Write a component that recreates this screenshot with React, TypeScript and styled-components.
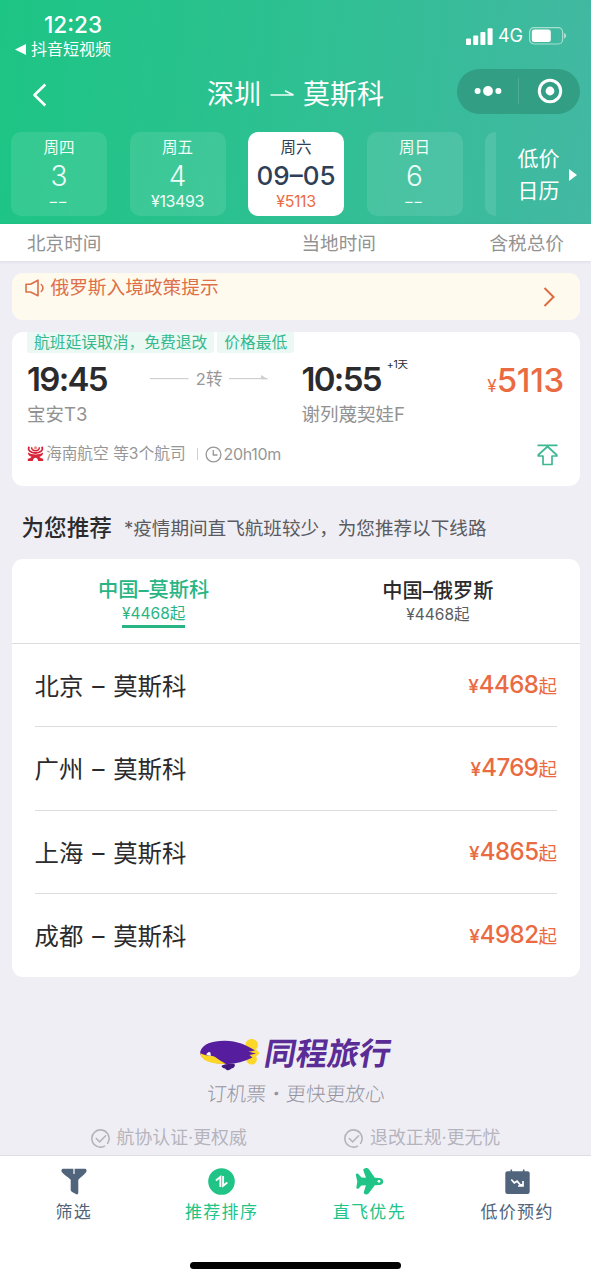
import React from 'react';
import styled, { createGlobalStyle } from 'styled-components';

const GlobalStyle = createGlobalStyle`
  * { box-sizing: border-box; }
  body {
    margin: 0;
    background: #efeef5;
    font-family: Inter, "Noto Sans CJK SC", sans-serif;
    color: #2b2b2d;
  }
  svg { display: block; flex: none; }
`;

type TextProps = {
  $size: number;
  $line?: number;
  $color?: string;
  $weight?: number;
  $spacing?: number;
};

const Text = styled.span<TextProps>`
  display: block;
  white-space: nowrap;
  font-size: ${p => p.$size}px;
  line-height: ${p => p.$line ?? 24}px;
  color: ${p => p.$color ?? 'inherit'};
  font-weight: ${p => p.$weight ?? 400};
  letter-spacing: ${p => p.$spacing ?? 0}px;
`;

const Screen = styled.main`
  width: 591px;
  height: 1280px;
  overflow: hidden;
  display: flex;
  flex-direction: column;
  background: #efeef5;
`;

const Header = styled.header`
  height: 224px;
  flex: none;
  color: #fff;
  background: linear-gradient(97deg, #1dc584 0%, #2ec092 50%, #43b8a3 100%);
`;

const StatusBar = styled.div`
  height: 61px;
  display: flex;
  justify-content: space-between;
  padding: 13px 24px 0 15px;
`;

const BackToApp = styled.div`
  display: flex;
  align-items: center;
  gap: 5px;
  height: 24px;
`;

const Clock = styled(Text)`
  padding-left: 29px;
`;

const Signals = styled.div`
  display: flex;
  align-items: center;
  height: 24px;
  margin-top: 11px;
`;

const NetworkType = styled(Text)`
  margin: 0 6px 0 5px;
`;

const TitleBar = styled.div`
  height: 71px;
  display: grid;
  grid-template-columns: 207px 1fr 134px;
  align-items: start;
`;

const BackButton = styled.div`
  padding: 22px 0 0 32px;
`;

const Route = styled.div`
  display: flex;
  align-items: center;
  height: 68px;
  gap: 8.5px;
`;

const Capsule = styled.div`
  margin-top: 8px;
  width: 123px;
  height: 44.5px;
  border-radius: 23px;
  background: #329f85;
  display: flex;
  align-items: center;
`;

const CapsuleHalf = styled.div`
  flex: 1;
  height: 26px;
  display: flex;
  align-items: center;
  justify-content: center;
  & + & { border-left: 1px solid #4fab94; }
`;

const DateStrip = styled.div`
  display: flex;
  padding-left: 11px;
`;

const DateList = styled.div`
  width: 485px;
  overflow: hidden;
  display: flex;
  gap: 22.5px;
`;

const DateCard = styled.div<{ $active?: boolean }>`
  flex: none;
  width: 96px;
  height: 84px;
  border-radius: 10px;
  padding-top: 5px;
  display: flex;
  flex-direction: column;
  align-items: center;
  color: ${p => (p.$active ? '#2f3f57' : '#effdf7')};
  background: ${p => (p.$active ? '#fff' : 'rgba(255,255,255,0.1)')};
`;

const LowFare = styled.div`
  display: flex;
  align-items: center;
  padding: 2px 0 0 21.5px;
  gap: 9px;
  height: 84px;
`;

const ColumnHeads = styled.div`
  height: 36.5px;
  flex: none;
  display: grid;
  grid-template-columns: 274.5px 188px 1fr;
  padding: 6.5px 0 0 27px;
  background: #fff;
  box-shadow: 0 1px 3px rgba(60, 50, 90, 0.1);
`;

const Content = styled.div`
  padding: 12px 11px 0 11.5px;
  flex: 1;
  min-height: 0;
`;

const Notice = styled.section`
  height: 47.5px;
  border-radius: 11px;
  background: #fffaee;
  display: flex;
  justify-content: space-between;
  padding: 3px 25px 0 13px;
`;

const NoticeLabel = styled.div`
  display: flex;
  align-items: center;
  gap: 6px;
  height: 25px;
`;

const NoticeArrow = styled.div`
  padding-top: 11px;
`;

const Card = styled.section`
  background: #fff;
  border-radius: 11px;
`;

const FlightCard = styled(Card)`
  margin-top: 11.5px;
  height: 154.5px;
  padding: 0 16px 0 15.5px;
`;

const Tags = styled.div`
  display: flex;
  gap: 3px;
`;

const Tag = styled(Text)`
  padding: 0 7px;
  background: #ebf8f3;
  border-radius: 0 0 3px 3px;
`;

const FlightMain = styled.div`
  display: grid;
  grid-template-columns: 274.5px 1fr auto;
  height: 82px;
  padding-top: 9px;
`;

const TimeLine = styled.div`
  display: flex;
  height: 34px;
  align-items: center;
`;

const Transfer = styled.div`
  display: flex;
  align-items: center;
  gap: 7px;
  margin-left: 43px;
`;

const DayOffset = styled(Text)`
  align-self: flex-start;
  margin: -4px 0 0 6px;
`;

const Fare = styled.div`
  display: flex;
  align-items: baseline;
  color: #ea6a42;
  height: 37px;
`;

const FlightFoot = styled.div`
  display: flex;
  align-items: center;
  height: 24px;
  margin-top: 7px;
  gap: 2px;
`;

const Separator = styled.i`
  width: 1px;
  height: 12px;
  margin: 0 5px 0 9px;
  background: #d0d0d0;
`;

const Collapse = styled.div`
  margin-left: auto;
  padding: 2px 6px 0 0;
`;

const SectionTitle = styled.div`
  display: flex;
  align-items: center;
  gap: 12px;
  height: 73px;
  padding: 10px 0 0 10px;
`;

const RouteCard = styled(Card)`
  height: 418px;
`;

const Tabs = styled.div`
  height: 84.5px;
  display: grid;
  grid-template-columns: 1fr 1fr;
  border-bottom: 1px solid #dcdce0;
`;

const Tab = styled.div<{ $active?: boolean }>`
  display: flex;
  flex-direction: column;
  align-items: center;
  padding-top: ${p => (p.$active ? 19 : 20)}px;
  color: ${p => (p.$active ? '#29b583' : '#2b2b2d')};
`;

const TabPrice = styled(Text)<{ $active?: boolean }>`
  height: 26px;
  border-bottom: 3.500px solid ${p => (p.$active ? '#29b583' : 'transparent')};
`;

const RouteRow = styled.div`
  height: 83.5px;
  margin: 0 23px;
  padding-top: 2px;
  display: flex;
  justify-content: space-between;
  align-items: center;
  border-bottom: 1px solid #dddde0;
  &:last-child { border-bottom-color: transparent; }
`;

const RouteName = styled(Text)`
  word-spacing: 2px;
`;

const RoutePrice = styled.div`
  display: flex;
  align-items: baseline;
  color: #ea6a42;
`;

const Brand = styled.footer`
  display: flex;
  flex-direction: column;
  align-items: center;
  padding-top: 59px;
`;

const BrandLogo = styled.div`
  display: flex;
  align-items: center;
  gap: 5px;
  height: 36px;
`;

const BrandName = styled(Text)`
  transform: skewX(-10deg);
`;

const Slogan = styled(Text)`
  margin-top: 8px;
  font-family: "Noto Sans CJK SC", sans-serif;
  transform: skewX(-5deg);
`;

const Pledges = styled.div`
  width: 100%;
  display: grid;
  grid-template-columns: 253.5px 1fr;
  padding-left: 79px;
  margin-top: 20px;
`;

const Pledge = styled.div`
  display: flex;
  align-items: center;
  gap: 7px;
`;

const BottomBar = styled.nav`
  height: 125.5px;
  flex: none;
  background: #fff;
  border-top: 1px solid #dfdee3;
  display: flex;
  flex-direction: column;
  align-items: center;
`;

const Actions = styled.div`
  width: 100%;
  display: grid;
  grid-template-columns: repeat(4, 1fr);
`;

const Action = styled.div<{ $active?: boolean }>`
  display: flex;
  flex-direction: column;
  align-items: center;
  padding-top: 12px;
  gap: 3px;
  color: ${p => (p.$active ? '#20c486' : '#50647c')};
`;

const HomeIndicator = styled.div`
  width: 211px;
  height: 7px;
  border-radius: 4px;
  background: #000;
  margin-top: 36px;
`;

const dates = [
  { week: '周四', day: '3' },
  { week: '周五', day: '4', price: '¥13493' },
  { week: '周六', day: '09–05', price: '¥5113', active: true },
  { week: '周日', day: '6' },
];

const routes = [
  { from: '北京', price: '4468' },
  { from: '广州', price: '4769' },
  { from: '上海', price: '4865' },
  { from: '成都', price: '4982' },
];

const SignalIcon = () => (
  <svg width="27" height="17" viewBox="0 0 27 17" fill="#fff">
    <rect x="0" y="10.5" width="5" height="6.5" rx="1" />
    <rect x="7.2" y="7.5" width="5" height="9.5" rx="1" />
    <rect x="14.4" y="4" width="5" height="13" rx="1" />
    <rect x="21.6" y="0.3" width="5" height="16.7" rx="1" />
  </svg>
);

const BatteryIcon = () => (
  <svg width="38" height="18" viewBox="0 0 38 18">
    <rect x="0.6" y="0.6" width="33" height="16.4" rx="4.5" fill="none" stroke="#a9dfcf" strokeWidth="1.2" />
    <rect x="2.8" y="2.6" width="19" height="12.4" rx="2.5" fill="#fff" />
    <path d="M35 6v5.6c1.6-.5 2.2-1.600 2.200-2.800S36.600 6.500 35 6z" fill="#a9dfcf" />
  </svg>
);

const BackIcon = () => (
  <svg width="15" height="24" viewBox="0 0 15 24" fill="none" stroke="#fff" strokeWidth="2.6">
    <path d="M13.300 1.500L2.500 12l10.800 10.500" strokeLinejoin="round" />
  </svg>
);

const RouteArrow = () => (
  <svg width="25" height="12" viewBox="0 0 25 12" fill="none" stroke="#f0fdf8" strokeWidth="1.7">
    <path d="M0.500 6H23.500L15 1.800" />
  </svg>
);

const MoreIcon = () => (
  <svg width="28" height="12" viewBox="0 0 28 12" fill="#fff">
    <circle cx="3.600" cy="6" r="3" />
    <circle cx="14" cy="6" r="4.900" />
    <circle cx="24.400" cy="6" r="3" />
  </svg>
);

const TargetIcon = () => (
  <svg width="26" height="26" viewBox="0 0 26 26">
    <circle cx="13" cy="13" r="10.700" fill="none" stroke="#fff" strokeWidth="3" />
    <circle cx="13" cy="13" r="4.400" fill="#fff" />
  </svg>
);

const SpeakerIcon = () => (
  <svg width="20" height="18" viewBox="0 0 20 18" fill="none" stroke="#dd7048" strokeWidth="1.600" strokeLinejoin="round" strokeLinecap="round">
    <path d="M1 5.200h4.500L13 1.200v15.600L5.500 13H1z" />
    <path d="M16.300 5.500c2.200 2 2.200 5 0 7" />
  </svg>
);

const TransferLine = ({ arrow }: { arrow?: boolean }) => (
  <svg width="39" height="8" viewBox="0 0 39 8" fill="#cfcfcf">
    <rect x="0" y="3" width="38.500" height="1.200" />
    {arrow && <path d="M32 0L39 4.200H32z" />}
  </svg>
);

const HainanLogo = () => (
  <svg width="17" height="16" viewBox="0 0 17 16" fill="none">
    <path d="M2.200 0.800C0.300 4 3.500 7 8.500 7s8.200-3 6.300-6.200" stroke="#d8253a" strokeWidth="1.800" />
    <path d="M4.600 1.200C4.300 6 12.700 6 12.400 1.200" stroke="#d8253a" strokeWidth="1.500" />
    <circle cx="8.500" cy="1.800" r="1.500" fill="#e98a80" />
    <path d="M1 6.500C4 9 13 9 16 6.500c.5 2.200-1.500 3.700-3.600 4.300.8 1 1.800 1.700 3.800 1.900V15h-5c-.2-2-1.200-3.300-2.700-3.300S6 13 5.800 15h-5v-2.300c2-.2 3-.9 3.800-1.900C2.500 10.200.5 8.700 1 6.500z" fill="#d8253a" />
  </svg>
);

const ClockIcon = () => (
  <svg width="17" height="17" viewBox="0 0 17 17" fill="none" stroke="#979797" strokeWidth="1.300">
    <circle cx="8.500" cy="8.500" r="7.400" />
    <path d="M8.300 4v5h4.200" />
  </svg>
);

const TopIcon = () => (
  <svg width="21" height="22" viewBox="0 0 21 22" fill="none" stroke="#3db893" strokeWidth="1.700" strokeLinejoin="round">
    <path d="M0.500 1.300H20.500M10.500 2.500L1.200 11v1H6v8.500h9V12h4.800v-1z" />
  </svg>
);

const Airship = () => (
  <svg width="60" height="34" viewBox="0 0 60 34">
    <path d="M45.500 9C45 4 49 1.500 53 2.200c5 .8 6.500 6.300 3 10l3.500 4-3.500 3.300c2.500 3.500-.5 8.500-5 8-3 0-5-2.500-4.500-6z" fill="#fcd629" />
    <path d="M0.300 14.500C2.500 7 13 3.600 25 3.800c12 .2 21.500 4.200 30 9.700l-6.500 1.200 7.500 1.800-6.500 1.500 3 2.500C44 24.500 36 27 28 27 14 27-1 23 .3 14.500z" fill="#561d9e" />
    <path d="M0.300 16.300c4 1.300 6.500 2.700 10.200 2.500 5-.2 8.500 5 15.500 8C13.500 27.800.5 24 .3 16.300z" fill="#fcd629" />
    <path d="M21.500 28.800c3-2 9-2.600 13-1.800 1.200 2.600-1 4.200-3.300 4.600-1.700 2.200-5 2-6-.2-2.200-.1-3.600-1-3.700-2.600z" fill="#43177f" />
    <path d="M6.500 18c.2-1.600.6-2.300 1.300-2.300.3-.9 2.400-.9 2.700 0l.3 3.100c-1.400.1-2.900-.2-4.300-.8z" fill="#fff" />
  </svg>
);

const CheckIcon = () => (
  <svg width="19" height="19" viewBox="0 0 19 19" fill="none" stroke="#b5b4bd" strokeWidth="1.600" strokeLinecap="round">
    <path d="M13.500 17.100A8.600 8.600 0 1 1 16.600 14.300" />
    <path d="M5.300 9.500l3.300 3.300 6-6" />
  </svg>
);

const FilterIcon = () => (
  <svg width="26" height="27" viewBox="0 0 26 27">
    <path d="M2 .8h22c1.500 0 2 2 1.200 3.300-1.900 3-5.500 5-7.900 7.600v12.700c0 1.800-1 2.400-2.400 1.700l-3.800-2.200c-.8-.5-1.400-1.300-1.400-2.200v-10C7.300 9.100 2.700 7.100.8 4.100 0 2.800.5.800 2 .8z" fill="currentColor" />
    <path d="M13 0v6" stroke="#fff" strokeWidth="1.200" />
  </svg>
);

const SortIcon = () => (
  <svg width="27" height="27" viewBox="0 0 27 27">
    <circle cx="13.500" cy="13.500" r="13.300" fill="currentColor" />
    <path d="M7.900 12.500l4.500-3.600v10M15.100 8v9.700l4.200-3.300" fill="none" stroke="#fff" strokeWidth="1.900" />
  </svg>
);

const PlaneIcon = () => (
  <svg width="29" height="27" viewBox="0 0 29 27">
    <path d="M9 .8c2-1.200 4-.9 5.100.8l5.700 8.100 4.500.2c2.400.2 3.900 1.500 3.900 3.600s-1.500 3.300-3.900 3.500l-4.500.2-6.200 8.300c-1 1-3 1.200-4.200.4-.8-.6-.6-1.600-.4-2.500l1.900-6.200-4.500.3-2.800 3c-.9.800-2.400.2-2.200-1l.9-6L.8 7c-.2-1.300 1.400-2.100 2.300-1.200L6.500 9.500l4.500.2-2.400-6.400C8.200 2.300 8.200 1.300 9 .8z" fill="currentColor" />
    <circle cx="24" cy="13.300" r="1.400" fill="#fff" />
  </svg>
);

const CalendarIcon = () => (
  <svg width="25" height="27" viewBox="0 0 25 27">
    <path d="M6.300 1.500v5M18.700 1.500v5" stroke="currentColor" strokeWidth="1.600" />
    <rect x="0.300" y="3.300" width="24.400" height="22.700" rx="2.200" fill="currentColor" />
    <path d="M6.300 11.500l3 3.300 2.800-1.600 3.200 3.600 2.500-.3M18 13v5h-5" fill="none" stroke="#fff" strokeWidth="1.700" />
  </svg>
);

const actions = [
  { label: '筛选', icon: <FilterIcon /> },
  { label: '推荐排序', icon: <SortIcon />, active: true },
  { label: '直飞优先', icon: <PlaneIcon />, active: true },
  { label: '低价预约', icon: <CalendarIcon /> },
];

export default function App() {
  return (
    <Screen>
      <GlobalStyle />
      <Header>
        <StatusBar>
          <div>
            <Clock $size={22.5} $weight={500}>12:23</Clock>
            <BackToApp>
              <svg width="11" height="11" viewBox="0 0 11 11" fill="#fff"><path d="M0 5.500L11 0v11z" /></svg>
              <Text $size={16}>抖音短视频</Text>
            </BackToApp>
          </div>
          <Signals>
            <SignalIcon />
            <NetworkType $size={18}>4G</NetworkType>
            <BatteryIcon />
          </Signals>
        </StatusBar>
        <TitleBar>
          <BackButton><BackIcon /></BackButton>
          <Route>
            <Text $size={27} $line={34}>深圳</Text>
            <RouteArrow />
            <Text $size={27} $line={34}>莫斯科</Text>
          </Route>
          <Capsule>
            <CapsuleHalf><MoreIcon /></CapsuleHalf>
            <CapsuleHalf><TargetIcon /></CapsuleHalf>
          </Capsule>
        </TitleBar>
        <DateStrip>
          <DateList>
            {dates.map(d => (
              <DateCard key={d.week} $active={d.active}>
                <Text $size={15.5} $line={22}>{d.week}</Text>
                <Text $size={d.active ? 26 : 28} $line={34} $weight={d.active ? 500 : 300}>{d.day}</Text>
                {d.price ? (
                  <Text $size={16} $line={17} $spacing={-0.4} $color={d.active ? '#ec6c45' : undefined}>{d.price}</Text>
                ) : (
                  <Text $size={14.500} $line={17} $spacing={2}>––</Text>
                )}
              </DateCard>
            ))}
            <DateCard />
          </DateList>
          <LowFare>
            <div>
              <Text $size={21} $line={32}>低价</Text>
              <Text $size={21} $line={32}>日历</Text>
            </div>
            <svg width="8" height="12" viewBox="0 0 8 12" fill="#fff"><path d="M0 0l8 6-8 6z" /></svg>
          </LowFare>
        </DateStrip>
      </Header>

      <ColumnHeads>
        <Text $size={18.600} $color="#929292">北京时间</Text>
        <Text $size={18.600} $color="#929292">当地时间</Text>
        <Text $size={18.600} $color="#929292">含税总价</Text>
      </ColumnHeads>

      <Content>
        <Notice>
          <NoticeLabel>
            <SpeakerIcon />
            <Text $size={18.700} $color="#dd7048">俄罗斯入境政策提示</Text>
          </NoticeLabel>
          <NoticeArrow>
            <svg width="12" height="20" viewBox="0 0 12 20" fill="none" stroke="#dd6a40" strokeWidth="2"><path d="M1.500 1l9 9-9 9" /></svg>
          </NoticeArrow>
        </Notice>

        <FlightCard>
          <Tags>
            <Tag $size={15.75} $line={21.500} $color="#35b98d">航班延误取消，免费退改</Tag>
            <Tag $size={15.75} $line={21.500} $color="#35b98d">价格最低</Tag>
          </Tags>
          <FlightMain>
            <div>
              <TimeLine>
                <Text $size={33} $line={34} $weight={600} $spacing={-1.700}>19:45</Text>
                <Transfer>
                  <TransferLine />
                  <Text $size={16.500} $color="#979797">2转</Text>
                  <TransferLine arrow />
                </Transfer>
              </TimeLine>
              <Text $size={18.500} $line={36} $color="#929292">宝安T3</Text>
            </div>
            <div>
              <TimeLine>
                <Text $size={33} $line={34} $weight={600} $spacing={-1.700}>10:55</Text>
                <DayOffset $size={10.500} $line={13} $spacing={-0.300}>+1天</DayOffset>
              </TimeLine>
              <Text $size={18.500} $line={36} $color="#929292">谢列蔑契娃F</Text>
            </div>
            <Fare>
              <Text $size={17} $line={37}>¥</Text>
              <Text $size={33} $line={37} $weight={500} $spacing={-0.300}>5113</Text>
            </Fare>
          </FlightMain>
          <FlightFoot>
            <HainanLogo />
            <Text $size={15.700} $color="#979797">海南航空 等3个航司</Text>
            <Separator />
            <ClockIcon />
            <Text $size={16} $color="#979797" $spacing={-0.350}>20h10m</Text>
            <Collapse><TopIcon /></Collapse>
          </FlightFoot>
        </FlightCard>

        <SectionTitle>
          <Text $size={22.600} $weight={500}>为您推荐</Text>
          <Text $size={18.600} $color="#5a5a60">*疫情期间直飞航班较少，为您推荐以下线路</Text>
        </SectionTitle>

        <RouteCard>
          <Tabs>
            <Tab $active>
              <Text $size={20.200} $weight={500}>中国–莫斯科</Text>
              <TabPrice $active $size={15.500} $line={24}>¥4468起</TabPrice>
            </Tab>
            <Tab>
              <Text $size={20.200} $weight={500}>中国–俄罗斯</Text>
              <TabPrice $size={15.500} $line={24} $color="#5c5c60">¥4468起</TabPrice>
            </Tab>
          </Tabs>
          {routes.map(r => (
            <RouteRow key={r.from}>
              <RouteName $size={24.400} $line={30}>{r.from} – 莫斯科</RouteName>
              <RoutePrice>
                <Text $size={19} $line={30} $weight={500}>¥</Text>
                <Text $size={24} $line={30} $weight={500} $spacing={-0.500}>{r.price}</Text>
                <Text $size={18.500} $line={30}>起</Text>
              </RoutePrice>
            </RouteRow>
          ))}
        </RouteCard>

        <Brand>
          <BrandLogo>
            <Airship />
            <BrandName $size={31.500} $line={36} $weight={700} $color="#5a2c96">同程旅行</BrandName>
          </BrandLogo>
          <Slogan $size={19.800} $line={26} $weight={300} $color="#95949e">订机票·更快更放心</Slogan>
          <Pledges>
            <Pledge>
              <CheckIcon />
              <Text $size={17.900} $color="#b5b4bd">航协认证·更权威</Text>
            </Pledge>
            <Pledge>
              <CheckIcon />
              <Text $size={17.900} $color="#b5b4bd">退改正规·更无忧</Text>
            </Pledge>
          </Pledges>
        </Brand>
      </Content>

      <BottomBar>
        <Actions>
          {actions.map(a => (
            <Action key={a.label} $active={a.active}>
              {a.icon}
              <Text $size={17} $line={28} $spacing={1.300}>{a.label}</Text>
            </Action>
          ))}
        </Actions>
        <HomeIndicator />
      </BottomBar>
    </Screen>
  );
}
